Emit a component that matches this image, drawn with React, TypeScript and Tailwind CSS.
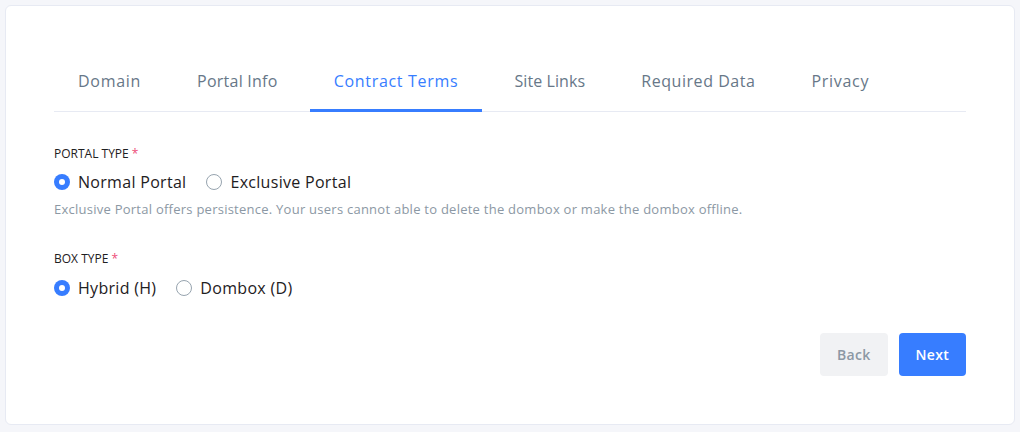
import React, { useState } from "react";

// tracking tuned per tab so widths line up with the design font
const TABS = [
  { label: "Domain", track: "tracking-[0.7px]" },
  { label: "Portal Info", track: "tracking-[0.25px]" },
  { label: "Contract Terms", track: "tracking-[0.7px]" },
  { label: "Site Links", track: "tracking-[0.1px]" },
  { label: "Required Data", track: "tracking-[0.55px]" },
  { label: "Privacy", track: "tracking-[0.7px]" },
];

function Radio({ checked, label, onClick }: { checked: boolean; label: string; onClick: () => void }) {
  return (
    <label className="flex items-center gap-2 cursor-pointer" onClick={onClick}>
      {checked ? (
        <span className="w-4 h-4 rounded-full bg-[#377dff] flex items-center justify-center">
          <span className="w-[6px] h-[6px] rounded-full bg-white" />
        </span>
      ) : (
        <span className="w-4 h-4 rounded-full border border-[#97a4af] bg-white" />
      )}
      <span className="text-[16px] text-[#1e2022] leading-6 tracking-[0.3px]">{label}</span>
    </label>
  );
}

export default function App() {
  const [tab, setTab] = useState(2);
  const [portal, setPortal] = useState("normal");
  const [box, setBox] = useState("hybrid");

  return (
    <div className="min-h-screen bg-[#f5f6fa] p-[5px]" style={{ fontFamily: '"Open Sans", "Liberation Sans", sans-serif' }}>
      <div className="bg-white border border-[#e7eaf3] rounded-[6px] h-[420px] px-12 pt-[48px]">
        {/* tabs */}
        <div className="flex gap-2 border-b border-[#e7eaf3]">
          {TABS.map((t, i) => (
            <button
              key={t.label}
              onClick={() => setTab(i)}
              className={
                "px-6 pt-[15px] pb-[16px] text-[16px] leading-6 -mb-px border-b-[3px] " +
                t.track +
                " " +
                (i === tab ? "text-[#377dff] border-[#377dff]" : "text-[#677788] border-transparent")
              }
            >
              {t.label}
            </button>
          ))}
        </div>

        {/* portal type */}
        <div className="mt-[34px]">
          <div className="text-[12px] leading-4 font-medium text-[#1e2022] uppercase">
            Portal Type <span className="text-[#ed4c78]">*</span>
          </div>
          <div className="flex gap-5 mt-[8px]">
            <Radio checked={portal === "normal"} label="Normal Portal" onClick={() => setPortal("normal")} />
            <Radio checked={portal === "exclusive"} label="Exclusive Portal" onClick={() => setPortal("exclusive")} />
          </div>
          <p className="text-[13px] leading-5 text-[#8c98a4] mt-[5px] tracking-[0.25px]">
            Exclusive Portal offers persistence. Your users cannot able to delete the dombox or make the dombox offline.
          </p>
        </div>

        {/* box type */}
        <div className="mt-[32px]">
          <div className="text-[12px] leading-4 font-medium text-[#1e2022] uppercase">
            Box Type <span className="text-[#ed4c78]">*</span>
          </div>
          <div className="flex gap-5 mt-[9px]">
            <Radio checked={box === "hybrid"} label="Hybrid (H)" onClick={() => setBox("hybrid")} />
            <Radio checked={box === "dombox"} label="Dombox (D)" onClick={() => setBox("dombox")} />
          </div>
        </div>

        {/* actions */}
        <div className="flex justify-end gap-[11px] mt-[33px]">
          <button className="h-[43px] px-[17px] rounded-[4px] bg-[#f1f2f4] text-[#8c98a4] text-[14px] font-semibold tracking-[0.3px]">Back</button>
          <button className="h-[43px] px-[17px] rounded-[4px] bg-[#377dff] text-white text-[14px] font-semibold tracking-[0.3px]">Next</button>
        </div>
      </div>
    </div>
  );
}
